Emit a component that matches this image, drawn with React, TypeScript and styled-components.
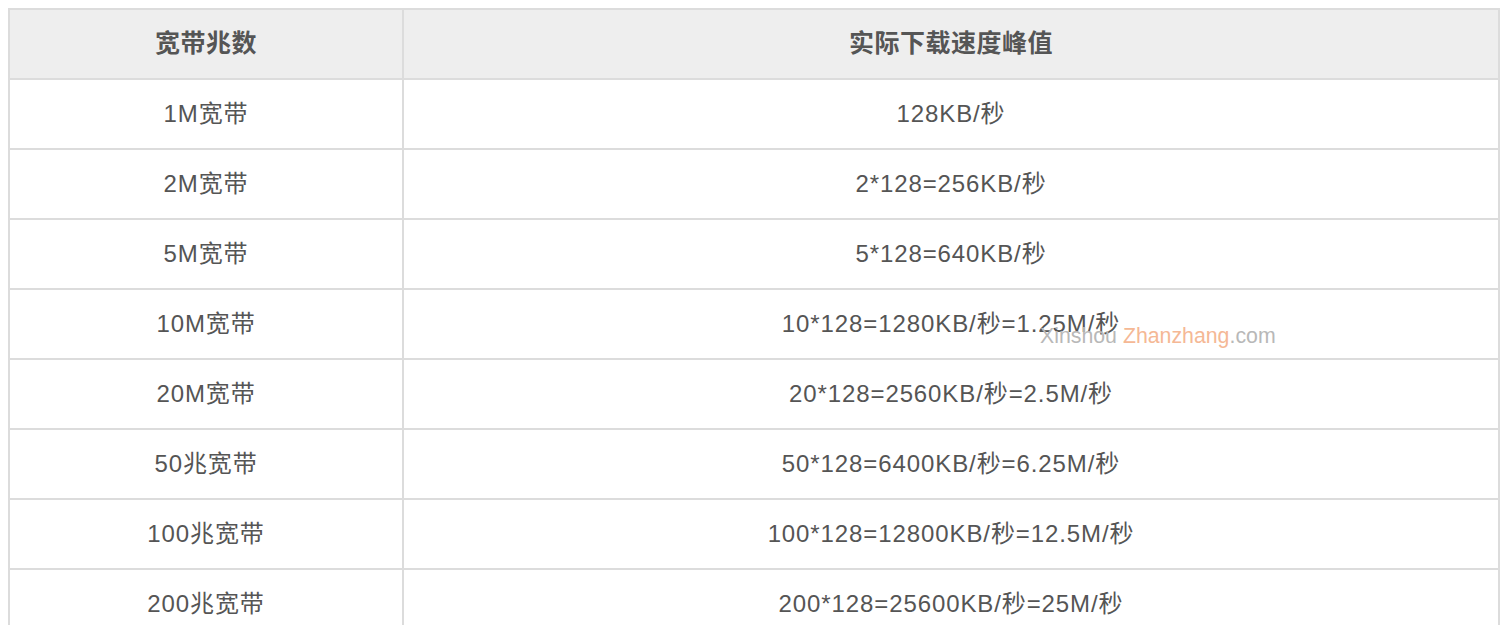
import React from "react";
import styled, { createGlobalStyle } from "styled-components";

const Global = createGlobalStyle`
  body {
    margin: 8px;
    background: #fff;
    font-family: "Liberation Sans", "Noto Sans CJK SC", sans-serif;
  }
`;

const Wrap = styled.div`
  position: relative;
`;

const Table = styled.table`
  width: 100%;
  border-collapse: collapse;
  table-layout: fixed;
  border: 2px solid #dcdcdc;
`;

const Th = styled.th<{ $w?: string }>`
  width: ${(p) => p.$w ?? "auto"};
  height: 70px;
  padding: 0 0 2px;
  box-sizing: border-box;
  background: #eeeeee;
  border: 2px solid #dcdcdc;
  color: #555;
  font-size: 25px;
  line-height: 1;
  font-weight: bold;
  letter-spacing: 0.5px;
  text-align: center;
  vertical-align: middle;
`;

const Td = styled.td`
  height: 70px;
  padding: 0 0 1px;
  box-sizing: border-box;
  border: 2px solid #dcdcdc;
  color: #555;
  font-size: 24px;
  line-height: 1;
  letter-spacing: 0.9px;
  text-align: center;
  vertical-align: middle;
`;

const Watermark = styled.div`
  position: absolute;
  left: 1032px;
  top: 318px;
  font-family: "Liberation Sans", sans-serif;
  font-size: 21.3px;
  line-height: 1;
  color: #b8b8b8;
  pointer-events: none;
`;

const Orange = styled.span`
  color: #f5b895;
`;

const rows: [string, string][] = [
  ["1M宽带", "128KB/秒"],
  ["2M宽带", "2*128=256KB/秒"],
  ["5M宽带", "5*128=640KB/秒"],
  ["10M宽带", "10*128=1280KB/秒=1.25M/秒"],
  ["20M宽带", "20*128=2560KB/秒=2.5M/秒"],
  ["50兆宽带", "50*128=6400KB/秒=6.25M/秒"],
  ["100兆宽带", "100*128=12800KB/秒=12.5M/秒"],
  ["200兆宽带", "200*128=25600KB/秒=25M/秒"],
];

export default function App() {
  return (
    <Wrap>
      <Global />
      <Table>
        <thead>
          <tr>
            <Th $w="394px">宽带兆数</Th>
            <Th>实际下载速度峰值</Th>
          </tr>
        </thead>
        <tbody>
          {rows.map(([a, b]) => (
            <tr key={a}>
              <Td>{a}</Td>
              <Td>{b}</Td>
            </tr>
          ))}
        </tbody>
      </Table>
      <Watermark>
        Xinshou <Orange>Zhanzhang</Orange>.com
      </Watermark>
    </Wrap>
  );
}
